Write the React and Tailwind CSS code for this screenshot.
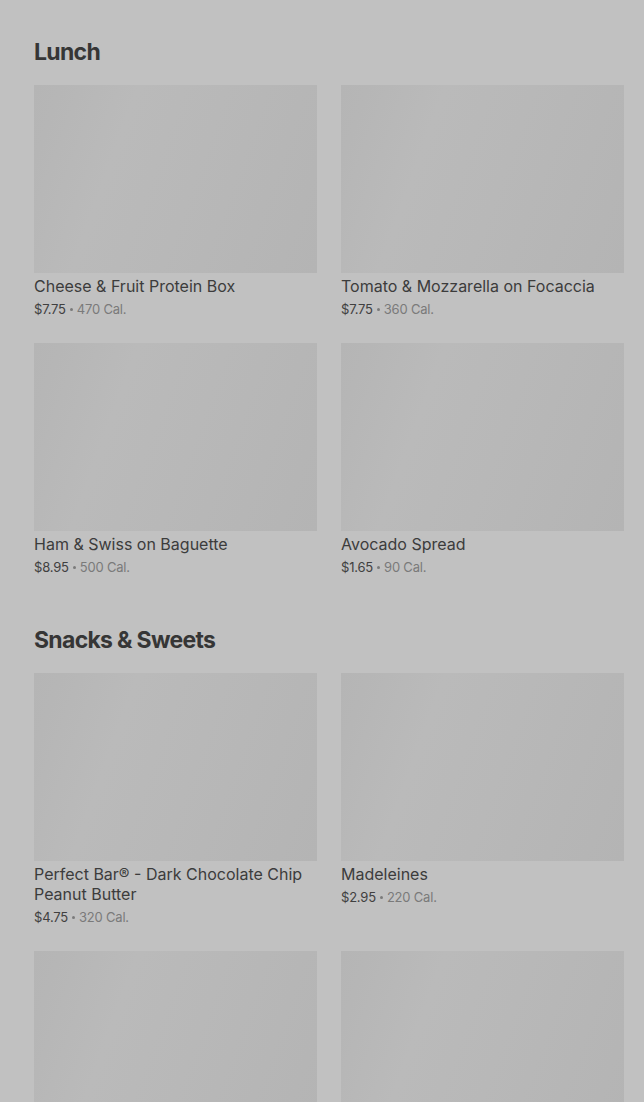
import React from "react";

const sections = [
  {
    title: "Lunch",
    items: [
      { name: "Cheese & Fruit Protein Box", price: "$7.75", cal: "470 Cal." },
      { name: "Tomato & Mozzarella on Focaccia", price: "$7.75", cal: "360 Cal." },
      { name: "Ham & Swiss on Baguette", price: "$8.95", cal: "500 Cal." },
      { name: "Avocado Spread", price: "$1.65", cal: "90 Cal." },
    ],
  },
  {
    title: "Snacks & Sweets",
    items: [
      { name: "Perfect Bar® - Dark Chocolate Chip Peanut Butter", price: "$4.75", cal: "320 Cal." },
      { name: "Madeleines", price: "$2.95", cal: "220 Cal." },
      { name: "", price: "", cal: "" },
      { name: "", price: "", cal: "" },
    ],
  },
];

function Card({ item }) {
  return (
    <div className="flex flex-col">
      <div className="h-[188px] w-full bg-[linear-gradient(110deg,#b5b5b5_0%,#b6b6b6_8%,#bababa_30%,#b8b8b8_55%,#b4b4b4_100%)]" />
      {item.name && (
        <>
          <div className="mt-[3px] text-[16px] leading-5 text-[#3c3c3c] font-normal">{item.name}</div>
          <div className="mt-[3px] h-5 flex items-center text-[13px] leading-5 tracking-[-0.2px]">
            <span className="text-[#404040]">{item.price}</span>
            <span className="mx-[4px] h-[3px] w-[3px] rounded-full bg-[#7a7a7a]" />
            <span className="text-[#7a7a7a]">{item.cal}</span>
          </div>
        </>
      )}
    </div>
  );
}

export default function App() {
  return (
    <div
      className="min-h-[1102px] h-[1102px] overflow-hidden w-full bg-[#c1c1c1] pl-[34px] pr-[20px]"
      style={{ fontFamily: "Inter, 'Noto Sans', sans-serif" }}
    >
      {sections.map((s, i) => (
        <section key={s.title} className={i === 0 ? "pt-[36px]" : "pt-[47px]"}>
          <h2 className="text-[23px] leading-8 font-bold tracking-[-0.7px] text-[#363636] mb-[17px]">{s.title}</h2>
          <div className="grid grid-cols-2 gap-x-6 gap-y-6">
            {s.items.map((it, j) => (
              <Card key={j} item={it} />
            ))}
          </div>
        </section>
      ))}
    </div>
  );
}
